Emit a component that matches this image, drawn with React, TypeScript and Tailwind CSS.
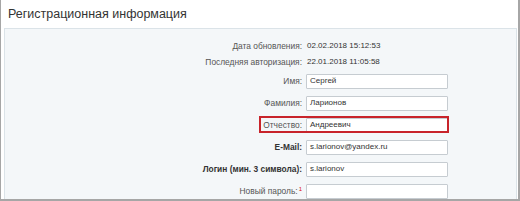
import React from "react";

const font = { fontFamily: '"Liberation Sans", Arial, sans-serif' };

interface Row {
  label: string;
  value: string;
  bold?: boolean;
  marked?: boolean;
  required?: boolean;
}

const inputRows: Row[] = [
  { label: "Имя:", value: "Сергей" },
  { label: "Фамилия:", value: "Ларионов" },
  { label: "Отчество:", value: "Андреевич", marked: true },
  { label: "E-Mail:", value: "s.larionov@yandex.ru", bold: true },
  { label: "Логин (мин. 3 символа):", value: "s.larionov", bold: true },
  { label: "Новый пароль:", value: "", required: true },
];

export default function App() {
  return (
    <div
      className="w-[520px] h-[201px] overflow-hidden bg-white border-l border-r-2 border-b-2 border-[#a6a6a6] flex flex-col"
      style={font}
    >
      <div className="h-[28px] shrink-0 flex items-center pl-[7px] pt-[1px] text-[12.5px] text-[#333]">
        Регистрационная информация
      </div>
      <div className="ml-[3px] mr-[1px] flex-1 bg-[#f4f7f9] border border-[#dbe3e8] pt-[9px]">
        <div className="flex h-[16px] items-center">
          <div className="w-[301px] text-right pr-[4px] text-[#555] text-[8.4px]">Дата обновления:</div>
          <div className="text-[#333] pl-[1px] text-[8px]">02.02.2018 15:12:53</div>
        </div>
        <div className="flex h-[16px] items-center">
          <div className="w-[301px] text-right pr-[4px] text-[#555] text-[8.4px]">Последняя авторизация:</div>
          <div className="text-[#333] pl-[1px] text-[8px]">22.01.2018 11:05:58</div>
        </div>
        {inputRows.map((r) => (
          <div key={r.label} className="relative flex h-[22px] items-center">
            <div
              className={`w-[301px] text-right pr-[4px] text-[8.4px] ${
                r.bold ? "font-bold text-[#333]" : "text-[#555]"
              }`}
            >
              {r.label}
              {r.required && (
                <sup className="text-[#d11] text-[6px] ml-[1px] font-normal">1</sup>
              )}
            </div>
            <div className="w-[142px] h-[15px] bg-white border border-[#c6ccd1] rounded-[1px] px-[3px] flex items-center text-[#333] text-[8px]">
              {r.value}
            </div>
            {r.marked && (
              <span className="absolute left-[254px] top-[2px] w-[190px] h-[17px] border-2 border-[#c8242b] pointer-events-none" />
            )}
          </div>
        ))}
      </div>
    </div>
  );
}
